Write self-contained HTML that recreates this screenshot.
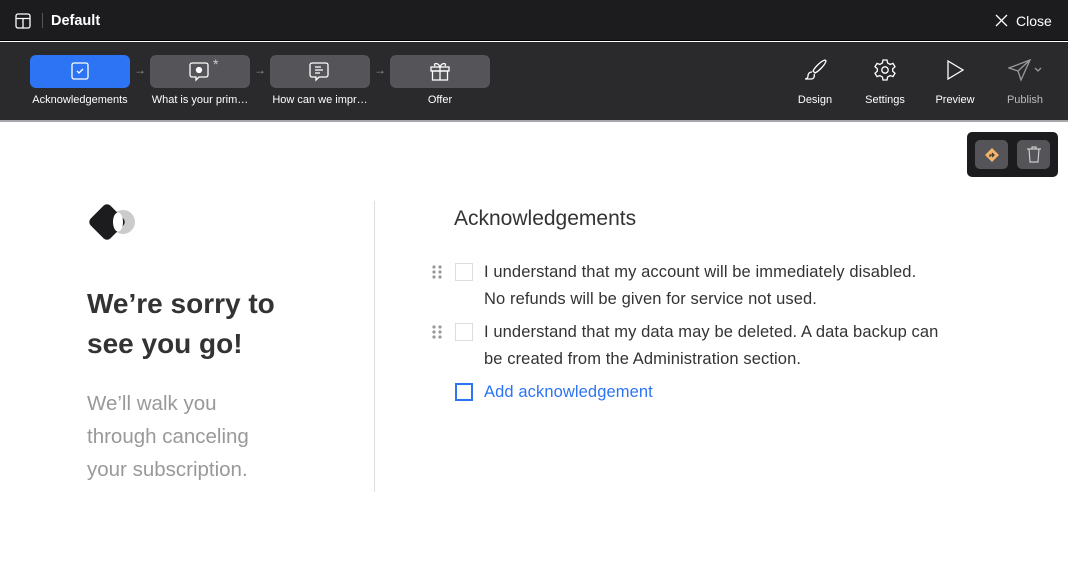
<!DOCTYPE html><html><head><style>
*{box-sizing:border-box;margin:0;padding:0}
body{width:1068px;height:572px;overflow:hidden;background:#fff;font-family:"Liberation Sans",sans-serif;position:relative}
.top{position:absolute;left:0;top:0;width:1068px;height:41px;background:#1c1c1f;border-bottom:1px solid #000;color:#fff}
.bar{position:absolute;left:0;top:42px;width:1068px;height:78px;background:#2a2a2d}
.line{position:absolute;top:120px;left:0;width:1068px;height:2px;background:#a6a6ab}
.step{position:absolute;top:13px;width:100px;height:33px;border-radius:6px;background:#545459}
.lbl{position:absolute;top:52px;width:120px;text-align:center;color:#fff;font-size:11px}
.arr{position:absolute;top:21px;color:#999;font-size:12px}
.tool{position:absolute;top:52px;width:70px;text-align:center;color:#fff;font-size:11px}
svg{position:absolute}
.t{position:absolute;font-size:16.5px;color:#333;line-height:27px;letter-spacing:0.1px}
.cb{position:absolute;width:18px;height:18px;border:1.5px solid #ddd;background:#fff}
.dots{position:absolute;width:10px;height:14px}
</style></head><body>
<div class="top">
<svg style="left:15px;top:13px" width="16" height="16" viewBox="0 0 16 16" fill="none" stroke="#fff" stroke-width="1.3"><rect x="1" y="1" width="14" height="14" rx="2"/><path d="M1 5.5h14M8 5.5V15"/></svg>
<div style="position:absolute;left:42px;top:13px;width:1px;height:15px;background:#555"></div>
<div style="position:absolute;left:51px;top:13px;font-size:14.5px;font-weight:bold">Default</div>
<svg style="left:995px;top:14px" width="13" height="13" viewBox="0 0 13 13" stroke="#fff" stroke-width="1.3"><path d="M1 1l11 11M12 1L1 12"/></svg>
<div style="position:absolute;left:1016px;top:13px;font-size:14px">Close</div>
</div>
<div class="bar">
<div class="step" style="left:30px;background:#2d74f5"></div>
<svg style="left:71px;top:20px" width="18" height="18" viewBox="0 0 18 18" fill="none" stroke="#fff" stroke-width="1.3"><rect x="1" y="1" width="16" height="16" rx="2"/><path d="M6 9l2 2 4-4"/></svg>
<div class="arr" style="left:134px">→</div>
<div class="step" style="left:150px"></div>
<svg style="left:189px;top:20px" width="22" height="20" viewBox="0 0 22 20" fill="none" stroke="#fff" stroke-width="1.3"><path d="M3 1h14a2 2 0 012 2v10a2 2 0 01-2 2h-7l-3 3v-3H3a2 2 0 01-2-2V3a2 2 0 012-2z"/><circle cx="10" cy="8" r="2.5" fill="#fff"/></svg>
<div style="position:absolute;left:213px;top:14px;color:#ccc;font-size:14px">*</div>
<div class="arr" style="left:254px">→</div>
<div class="step" style="left:270px"></div>
<svg style="left:309px;top:20px" width="22" height="20" viewBox="0 0 22 20" fill="none" stroke="#fff" stroke-width="1.3"><path d="M3 1h14a2 2 0 012 2v10a2 2 0 01-2 2h-7l-3 3v-3H3a2 2 0 01-2-2V3a2 2 0 012-2z"/><path d="M6 5h6M6 8h8M6 11h5"/></svg>
<div class="arr" style="left:374px">→</div>
<div class="step" style="left:390px"></div>
<svg style="left:429px;top:18px" width="22" height="22" viewBox="0 0 22 22" fill="none" stroke="#fff" stroke-width="1.3"><rect x="2" y="7" width="18" height="4"/><rect x="3.5" y="11" width="15" height="9"/><path d="M11 7v13M11 7c-2-5-7-4-5-1M11 7c2-5 7-4 5-1"/></svg>
<div class="lbl" style="left:20px">Acknowledgements</div>
<div class="lbl" style="left:140px">What is your prim…</div>
<div class="lbl" style="left:260px">How can we impr…</div>
<div class="lbl" style="left:380px">Offer</div>
<svg style="left:803px;top:16px" width="24" height="24" viewBox="0 0 24 24" fill="none" stroke="#fff" stroke-width="1.3"><path d="M22 2c-4 1-10 7-12 11l2 2c4-2 10-8 11-12z"/><path d="M9 14c-3 0-4 2-4 4s-2 3-3 3h6c3 0 4-3 3-5"/></svg>
<svg style="left:873px;top:16px" width="24" height="24" viewBox="0 0 24 24" fill="none" stroke="#fff" stroke-width="1.3"><circle cx="12" cy="12" r="3.2"/><path d="M10 2h4l.6 3 2.5 1.4 2.9-1 2 3.4-2.3 2v2.4l2.3 2-2 3.4-2.9-1L14.6 19 14 22h-4l-.6-3-2.5-1.4-2.9 1-2-3.4 2.3-2v-2.4l-2.3-2 2-3.4 2.9 1L9.4 5z"/></svg>
<svg style="left:944px;top:17px" width="22" height="22" viewBox="0 0 22 22" fill="none" stroke="#fff" stroke-width="1.3"><path d="M4 2l15 9-15 9z"/></svg>
<svg style="left:1008px;top:16px" width="36" height="24" viewBox="0 0 36 24" fill="none" stroke="#999" stroke-width="1.3"><path d="M22 2L1 10l9 3 3 9z M10 13l12-11"/><path d="M27 10l3 3 3-3"/></svg>
<div class="tool" style="left:780px">Design</div>
<div class="tool" style="left:850px">Settings</div>
<div class="tool" style="left:920px">Preview</div>
<div class="tool" style="left:990px;color:#bbb">Publish</div>
</div>
<div class="line"></div>
<div style="position:absolute;left:967px;top:132px;width:91px;height:45px;background:#1c1c1f;border-radius:5px"></div>
<div style="position:absolute;left:975px;top:140px;width:33px;height:29px;background:#545459;border-radius:5px"></div>
<div style="position:absolute;left:1017px;top:140px;width:33px;height:29px;background:#545459;border-radius:5px"></div>
<svg style="left:984px;top:147px" width="16" height="16" viewBox="0 0 16 16"><path d="M8 1l7 7-7 7-7-7z" fill="#f2b46a"/><path d="M6 10V8h3.5M8 6l2 2-2 2" stroke="#333" stroke-width="1.2" fill="none"/></svg>
<svg style="left:1026px;top:146px" width="16" height="17" viewBox="0 0 16 17" fill="none" stroke="#ccc" stroke-width="1.2"><path d="M1 3h14M6 3V1h4v2M3 3l1 13h8l1-13"/></svg>
<svg style="left:84px;top:199px" width="54" height="46" viewBox="0 0 54 46"><circle cx="39" cy="23" r="12" fill="#ccc"/><rect x="9" y="9" width="28" height="28" rx="5" transform="rotate(45 23 23)" fill="#1c1c1f"/><ellipse cx="34" cy="23" rx="5" ry="9.5" fill="#fff"/></svg>
<div style="position:absolute;left:87px;top:284px;font-size:28px;font-weight:bold;color:#333;line-height:40px">We’re sorry to<br>see you go!</div>
<div style="position:absolute;left:87px;top:387px;font-size:20.5px;color:#999;line-height:33px">We’ll walk you<br>through canceling<br>your subscription.</div>
<div style="position:absolute;left:374px;top:201px;width:1px;height:291px;background:#ddd"></div>
<div style="position:absolute;left:454px;top:207px;font-size:21px;color:#333">Acknowledgements</div>
<svg class="dots" style="left:432px;top:265px" viewBox="0 0 10 14" fill="#999"><circle cx="2" cy="2" r="1.6"/><circle cx="8" cy="2" r="1.6"/><circle cx="2" cy="7" r="1.6"/><circle cx="8" cy="7" r="1.6"/><circle cx="2" cy="12" r="1.6"/><circle cx="8" cy="12" r="1.6"/></svg>
<svg class="dots" style="left:432px;top:325px" viewBox="0 0 10 14" fill="#999"><circle cx="2" cy="2" r="1.6"/><circle cx="8" cy="2" r="1.6"/><circle cx="2" cy="7" r="1.6"/><circle cx="8" cy="7" r="1.6"/><circle cx="2" cy="12" r="1.6"/><circle cx="8" cy="12" r="1.6"/></svg>
<div class="cb" style="left:455px;top:263px"></div>
<div class="cb" style="left:455px;top:323px"></div>
<div class="cb" style="left:455px;top:383px;border:2px solid #2d74f5"></div>
<div class="t" style="left:484px;top:259px">I understand that my account will be immediately disabled.<br>No refunds will be given for service not used.</div>
<div class="t" style="left:484px;top:319px">I understand that my data may be deleted. A data backup can<br>be created from the Administration section.</div>
<div class="t" style="left:484px;top:379px;color:#2d74f5">Add acknowledgement</div>
</body></html>
